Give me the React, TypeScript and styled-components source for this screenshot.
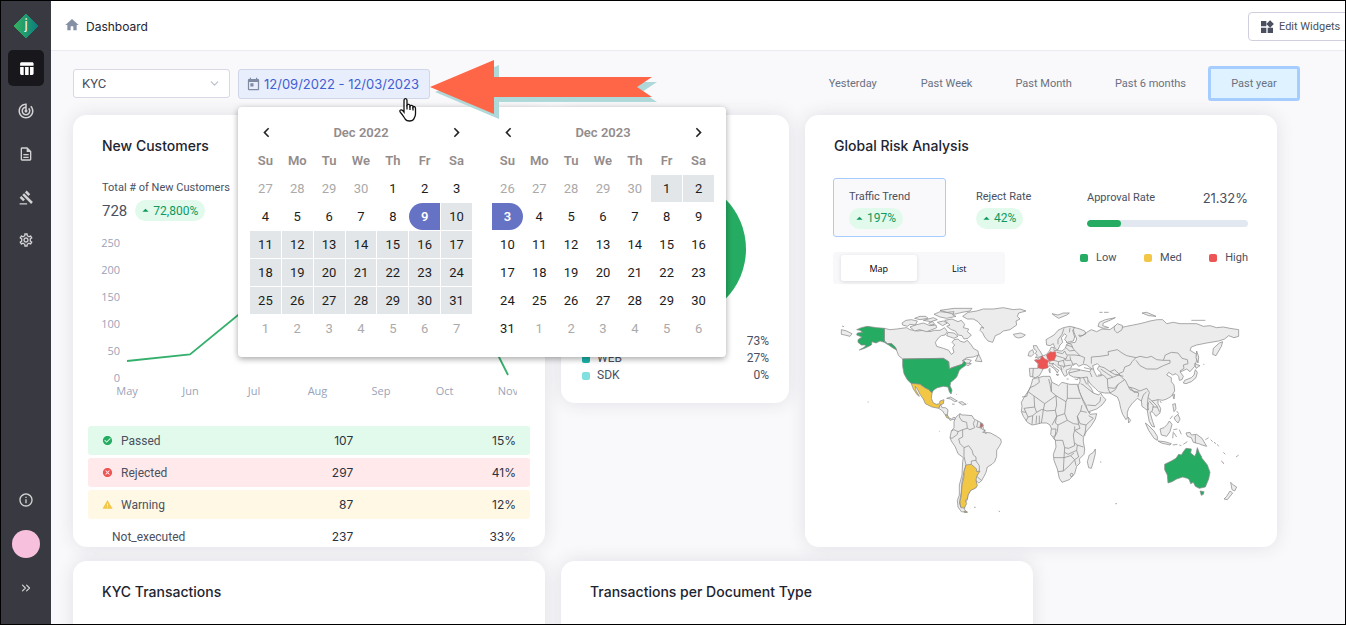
import React from "react";
import styled, { createGlobalStyle, css } from "styled-components";
import {
  MdTableChart,
  MdTrackChanges,
  MdOutlineDescription,
  MdGavel,
  MdOutlineSettings,
  MdInfoOutline,
  MdHome,
  MdWidgets,
  MdToday,
  MdChevronLeft,
  MdChevronRight,
  MdCheckCircle,
  MdCancel,
  MdWarning,
  MdArrowDropUp,
} from "react-icons/md";
import { ChevronDown, ChevronsRight } from "lucide-react";

const GlobalStyle = createGlobalStyle`
  *, *::before, *::after { box-sizing: border-box; }
  body { margin: 0; font-family: Roboto, "Liberation Sans", sans-serif; font-size: 12px; color: #4a5060; background: #f9f9fb; }
  button, select { font: inherit; color: inherit; }
  h2, p { margin: 0; }
`;

const heading = css`
  font-family: Inter, "Liberation Sans", sans-serif;
  font-size: 14px;
  line-height: 20px;
  font-weight: 500;
  color: #1d2430;
`;

/* ---------- shell ---------- */

const Shell = styled.div`
  display: flex;
  height: 100vh;
  border: 1px solid #000;
  overflow: hidden;
`;

const Sidebar = styled.nav`
  flex: none;
  width: 50px;
  background: #393941;
  display: flex;
  flex-direction: column;
  align-items: center;
  justify-content: space-between;
  padding-bottom: 18px;
`;

const NavGroup = styled.div<{ $gap: number }>`
  display: flex;
  flex-direction: column;
  align-items: center;
  gap: ${(p) => p.$gap}px;
`;

const Brand = styled.a`
  height: 42px;
  padding-top: 12px;
  display: block;
`;

const NavButton = styled.button<{ $active?: boolean }>`
  width: 36px;
  height: 36px;
  padding: 0;
  border: 0;
  border-radius: 5px;
  display: flex;
  align-items: center;
  justify-content: center;
  color: ${(p) => (p.$active ? "#fff" : "#d2d2d4")};
  background: ${(p) => (p.$active ? "#18181c" : "transparent")};
`;

const Avatar = styled.span`
  width: 28px;
  height: 28px;
  border-radius: 50%;
  background: #f7c0dd;
`;

const Page = styled.div`
  flex: 1;
  min-width: 0;
  display: flex;
  flex-direction: column;
  background: #f9f9fb;
`;

const TopBar = styled.header`
  flex: none;
  height: 50px;
  background: #fff;
  border-bottom: 1px solid #ebecf2;
  display: flex;
  align-items: center;
  padding: 2px 0 0 13px;
`;

const Crumb = styled.a`
  display: flex;
  align-items: center;
  gap: 6px;
  font-family: Inter, "Liberation Sans", sans-serif;
  font-size: 12px;
  color: #1d2430;
  text-decoration: none;
  svg {
    color: #8690a5;
    margin-bottom: 3px;
  }
`;

const EditButton = styled.button`
  margin-left: auto;
  margin-right: -11px;
  width: 108px;
  height: 29px;
  padding: 0 0 0 10px;
  border: 1px solid #cfcfe0;
  border-radius: 4px;
  background: #fff;
  display: flex;
  align-items: center;
  gap: 4px;
  font-size: 11px;
  white-space: nowrap;
  color: #4a5060;
`;

/* ---------- filters ---------- */

const Filters = styled.div`
  flex: none;
  height: 64px;
  padding: 0 45px 0 22px;
  display: flex;
  align-items: center;
`;

const SelectBox = styled.div`
  display: grid;
  align-items: center;
  width: 157px;
  height: 29px;
  margin-right: 8px;
  > * {
    grid-area: 1 / 1;
  }
  svg {
    justify-self: end;
    margin-right: 9px;
    color: #b9bdca;
    pointer-events: none;
  }
`;

const Select = styled.select`
  appearance: none;
  width: 100%;
  height: 29px;
  padding: 0 8px;
  border: 1px solid #d8d8e6;
  border-radius: 3px;
  background: #fff;
  font-size: 13px;
`;

const DateField = styled.div`
  position: relative;
  z-index: 5;
  margin-top: 2px;
`;

const DateButton = styled.button`
  width: 192px;
  height: 30px;
  padding: 0 0 0 7px;
  border: 1px solid #cfd6e8;
  border-radius: 3px;
  background: #e8eefb;
  display: flex;
  align-items: center;
  gap: 3px;
  font-family: Inter, "Liberation Sans", sans-serif;
  font-size: 13px;
  color: #3f5fd4;
  white-space: pre;
  svg {
    color: #7f8aa3;
  }
`;

const Periods = styled.div`
  margin-left: auto;
  display: flex;
  gap: 1px;
`;

const Period = styled.button<{ $active?: boolean }>`
  height: 35px;
  min-width: 92px;
  padding: 0 18px;
  border: 3px solid ${(p) => (p.$active ? "#a6cdff" : "transparent")};
  border-radius: 3px;
  background: ${(p) => (p.$active ? "#def3ff" : "transparent")};
  font-size: 11px;
  color: #6a7080;
  white-space: nowrap;
`;

/* ---------- calendar ---------- */

const Popup = styled.div`
  position: absolute;
  left: 0;
  top: 38px;
  width: 488px;
  height: 250px;
  padding: 11px;
  display: flex;
  gap: 18px;
  background: #fff;
  border-radius: 4px;
  box-shadow: 0 2px 6px rgba(0, 0, 0, 0.35);
`;

const Month = styled.div`
  width: 224px;
`;

const MonthHead = styled.div`
  height: 28px;
  padding: 0 7px;
  display: flex;
  align-items: center;
  justify-content: space-between;
  font-size: 13px;
  font-weight: 600;
  color: #938c8c;
`;

const ArrowButton = styled.button`
  border: 0;
  padding: 0;
  width: 20px;
  height: 20px;
  background: none;
  color: #222;
  display: flex;
  align-items: center;
  justify-content: center;
`;

const Days = styled.table`
  width: 224px;
  table-layout: fixed;
  border-spacing: 1px;
  th,
  td {
    height: 27px;
    padding: 0;
  }
  th {
    font-size: 13px;
    font-weight: 600;
    color: #938c8c;
  }
`;

type DayKind = "plain" | "muted" | "range" | "start" | "end";

const DayButton = styled.button<{ $kind: DayKind }>`
  display: block;
  width: 100%;
  height: 27px;
  padding: 0 0 1px;
  border: 0;
  font-size: 13px;
  font-weight: ${(p) => (p.$kind === "start" || p.$kind === "end" ? 600 : 400)};
  color: ${(p) =>
    p.$kind === "muted" ? "#aaa" : p.$kind === "start" || p.$kind === "end" ? "#fff" : "#1c1c1c"};
  background: ${(p) =>
    p.$kind === "range" ? "#e2e6e9" : p.$kind === "start" || p.$kind === "end" ? "#6673c4" : "transparent"};
  border-radius: ${(p) =>
    p.$kind === "start" ? "14px 0 0 14px" : p.$kind === "end" ? "0 14px 14px 0" : "0"};
`;

const Pointer = styled.svg`
  position: absolute;
  left: 192px;
  top: -10px;
  pointer-events: none;
`;

const HandCursor = styled.svg`
  position: absolute;
  left: 160px;
  top: 28px;
  pointer-events: none;
`;

/* ---------- cards ---------- */

const Board = styled.main`
  display: grid;
  grid-template-columns: repeat(5, minmax(0, 1fr));
  gap: 14px 16px;
  padding: 0 68px 0 22px;
`;

const Card = styled.section<{ $span: number; $tall?: boolean }>`
  grid-column: span ${(p) => p.$span};
  align-self: start;
  height: ${(p) => (p.$tall ? "432px" : "288px")};
  overflow: hidden;
  background: #fff;
  border-radius: 14px;
  box-shadow: 0 0 18px rgba(50, 50, 80, 0.12);
`;

const CardTitle = styled.h2`
  ${heading}
  padding: 21px 29px 0;
`;

const Total = styled.p`
  margin: 24px 29px 0;
  font-size: 11px;
  line-height: 16px;
`;

const TotalLine = styled.div`
  margin: 4px 29px 0;
  display: flex;
  align-items: center;
  gap: 8px;
  font-size: 15px;
  line-height: 20px;
`;

const Badge = styled.span`
  display: inline-flex;
  align-items: center;
  height: 21px;
  padding: 0 7px 0 3px;
  border-radius: 11px;
  background: #e2faec;
  color: #0d9960;
  font-size: 12px;
`;

const LineChart = styled.svg`
  display: block;
  margin: 12px 0 0 15px;
  text {
    font-family: "Open Sans", sans-serif;
    font-size: 11px;
    fill: #9aa3ba;
  }
`;

const StatusTable = styled.table`
  width: calc(100% - 30px);
  margin: 22px 15px 0;
  border-spacing: 0 3px;
  table-layout: fixed;
  td,
  th {
    height: 29px;
    padding: 0;
    text-align: right;
    font-weight: 400;
  }
  td {
    width: 20%;
    font-family: Inter, "Liberation Sans", sans-serif;
    font-size: 12px;
    color: #2c3240;
  }
  th {
    width: 40%;
    text-align: left;
    padding-left: 14px;
    border-radius: 3px 0 0 3px;
  }
  td:last-child {
    width: 40%;
    padding-right: 14px;
    border-radius: 0 3px 3px 0;
  }
`;

const StatusRow = styled.tr<{ $tint: string }>`
  background: ${(p) => p.$tint};
`;

const StatusLabel = styled.span<{ $indent?: boolean }>`
  display: flex;
  align-items: center;
  gap: 8px;
  padding-left: ${(p) => (p.$indent ? "10px" : "0")};
`;

const Pie = styled.svg`
  display: block;
  margin: 22px auto 0;
`;

const Breakdown = styled.ul`
  list-style: none;
  margin: 13px 20px 0 21px;
  padding: 0;
  font-size: 12px;
  line-height: 17px;
`;

const BreakdownItem = styled.li`
  display: flex;
  align-items: center;
  gap: 7px;
  > span:last-child {
    margin-left: auto;
  }
`;

const Swatch = styled.i<{ $color: string }>`
  width: 8px;
  height: 8px;
  border-radius: 2px;
  background: ${(p) => p.$color};
`;

const RiskBody = styled.div`
  display: flex;
  justify-content: space-between;
  padding: 22px 29px 0 28px;
`;

const Metrics = styled.div`
  display: grid;
  grid-template-columns: 113px 90px;
  column-gap: 14px;
  row-gap: 15px;
`;

const Metric = styled.button<{ $active?: boolean }>`
  height: 59px;
  padding: 3px 15px 0;
  border: 1px solid ${(p) => (p.$active ? "#a6cdff" : "transparent")};
  border-radius: 3px;
  background: ${(p) => (p.$active ? "#f9f9fc" : "transparent")};
  display: flex;
  flex-direction: column;
  align-items: flex-start;
  justify-content: center;
  gap: 4px;
  line-height: 14px;
  font-size: 11px;
  white-space: nowrap;
`;

const Toggle = styled.div`
  grid-column: 1 / -1;
  width: 172px;
  height: 32px;
  padding: 3px 8px;
  border-radius: 3px;
  background: #f8f8fa;
  display: flex;
  gap: 5px;
`;

const ToggleButton = styled.button<{ $active?: boolean }>`
  width: 76px;
  border: 0;
  border-radius: 3px;
  font-family: "Open Sans", sans-serif;
  font-size: 9px;
  color: #000;
  background: ${(p) => (p.$active ? "#fff" : "transparent")};
  box-shadow: ${(p) => (p.$active ? "0 1px 4px rgba(0,0,0,.12)" : "none")};
`;

const Approval = styled.div`
  width: 168px;
  padding-top: 10px;
`;

const ApprovalHead = styled.label`
  display: flex;
  justify-content: space-between;
  align-items: center;
  font-size: 11px;
  line-height: 20px;
  padding-left: 7px;
  strong {
    font-family: Inter, "Liberation Sans", sans-serif;
    font-weight: 400;
    font-size: 13px;
  }
`;

const Bar = styled.progress`
  appearance: none;
  display: block;
  width: 161px;
  height: 7px;
  margin: 12px 0 0 7px;
  border: 0;
  border-radius: 4px;
  overflow: hidden;
  &::-webkit-progress-bar {
    background: #e2e8f0;
  }
  &::-webkit-progress-value {
    background: #26ab62;
    border-radius: 4px;
  }
`;

const Legend = styled.div`
  display: flex;
  justify-content: space-between;
  margin-top: 23px;
  font-size: 11px;
  line-height: 16px;
  span {
    display: flex;
    align-items: center;
    gap: 8px;
  }
`;

const MapSvg = styled.svg`
  display: block;
  margin: 11px 0 0 25px;
  .land {
    fill: #ececec;
  }
  .low {
    fill: #26ab62;
  }
  .med {
    fill: #f3c746;
  }
  .high {
    fill: #ed5454;
  }
  .sea {
    fill: #fff;
  }
  .border {
    fill: none;
  }
`;

/* ---------- data ---------- */

const weekdays = ["Su", "Mo", "Tu", "We", "Th", "Fr", "Sa"];

type MonthData = { name: string; lead: number[]; days: number; kind: (d: number) => DayKind };

const months: MonthData[] = [
  {
    name: "Dec 2022",
    lead: [27, 28, 29, 30],
    days: 31,
    kind: (d) => (d === 9 ? "start" : d > 9 ? "range" : "plain"),
  },
  {
    name: "Dec 2023",
    lead: [26, 27, 28, 29, 30],
    days: 31,
    kind: (d) => (d === 3 ? "end" : d < 3 ? "range" : "plain"),
  },
];

function buildWeeks(m: MonthData) {
  const cells: { d: number; kind: DayKind }[] = m.lead.map((d) => ({ d, kind: "muted" }));
  for (let d = 1; d <= m.days; d++) cells.push({ d, kind: m.kind(d) });
  for (let d = 1; cells.length < 42; d++) cells.push({ d, kind: "muted" });
  return Array.from({ length: 6 }, (_, i) => cells.slice(i * 7, i * 7 + 7));
}

const statuses = [
  { label: "Passed", count: 107, share: "15%", tint: "#e2faec", icon: <MdCheckCircle size={11} color="#26ab62" /> },
  { label: "Rejected", count: 297, share: "41%", tint: "#ffe9ea", icon: <MdCancel size={11} color="#ed5454" /> },
  { label: "Warning", count: 87, share: "12%", tint: "#fff8e4", icon: <MdWarning size={11} color="#f3c746" /> },
  { label: "Not_executed", count: 237, share: "33%", tint: "transparent", icon: null },
];

const periods = ["Yesterday", "Past Week", "Past Month", "Past 6 months", "Past year"];
const chartMonths = ["May", "Jun", "Jul", "Aug", "Sep", "Oct", "Nov"];
const chartTicks = [250, 200, 150, 100, 50, 0];

/* ---------- parts ---------- */

function Calendar({ month }: { month: MonthData }) {
  return (
    <Month>
      <MonthHead>
        <ArrowButton aria-label="Previous month">
          <MdChevronLeft size={19} />
        </ArrowButton>
        {month.name}
        <ArrowButton aria-label="Next month">
          <MdChevronRight size={19} />
        </ArrowButton>
      </MonthHead>
      <Days>
        <thead>
          <tr>
            {weekdays.map((w) => (
              <th key={w} scope="col">
                {w}
              </th>
            ))}
          </tr>
        </thead>
        <tbody>
          {buildWeeks(month).map((week, i) => (
            <tr key={i}>
              {week.map((c) => (
                <td key={c.d}>
                  <DayButton $kind={c.kind}>{c.d}</DayButton>
                </td>
              ))}
            </tr>
          ))}
        </tbody>
      </Days>
    </Month>
  );
}

function WorldMap() {
  return (
    <MapSvg width="420" height="230" viewBox="0 0 1260 690" role="img" aria-label="World risk map">
      <g stroke="#8a8a8a" strokeWidth="2.2" strokeLinejoin="round">
        <g className="land">
          <path d="M163 100L180 104L200 102L230 98L240 104L262 108L280 106L300 110L314 106L330 106L344 98L352 110L345 120L334 122L326 128L316 142L320 154L340 160L356 166L364 178L372 172L368 158L374 150L366 142L372 134L384 132L390 138L402 142L412 136L424 150L430 160L444 168L446 180L430 186L410 188L396 198L410 192L424 196L416 206L398 208L384 212L366 218L358 222L356 200L340 190L218 192L206 182L198 162L185 146L172 146L163 138Z" />
          <path d="M446 178L452 190L456 200L436 198ZM408 204L424 206L414 212L406 208Z" />
          <path d="M216 84L228 76L244 74L262 78L256 90L240 88L232 94L218 90ZM240 96L256 90L280 84L300 92L318 90L320 98L306 104L290 110L268 104L254 108ZM254 70L270 64L288 64L294 70L270 74ZM280 76L310 68L322 74L302 80ZM312 58L330 50L350 52L372 50L368 60L378 64L350 70L330 66ZM330 46L372 40L426 40L420 48L396 52L372 58L350 52ZM322 82L340 78L352 84L338 92ZM296 84L308 80L314 88L302 90Z" />
          <path d="M344 76L366 72L384 80L394 76L404 88L400 98L416 102L412 110L424 120L414 130L402 132L396 122L384 120L376 108L364 104L350 94L360 90ZM354 112L372 114L384 124L372 130L350 122Z" />
          <path d="M398 64L414 52L440 48L460 42L490 42L520 38L550 44L570 42L588 48L566 54L562 64L570 72L558 78L560 90L540 104L520 108L510 116L496 122L488 142L474 138L464 126L458 114L450 106L454 96L462 100L452 90L444 80L430 72L412 72Z" />
          <path d="M550 118L560 116L572 114L586 120L578 126L566 129L556 126ZM34 104L50 108L66 116L60 124L44 120L34 118Z" />
          <path d="M326 340L332 328L336 338L346 338L354 344L352 360L344 358L338 348ZM356 368L364 372L372 366L378 372L366 374L360 376ZM350 310L362 306L382 318L374 320L362 312ZM386 322L396 320L408 328L398 330ZM366 327L374 328M410 328L412 326" />
          <path d="M378 366L390 356L396 360L404 360L426 362L432 372L444 378L458 386L460 400L466 408L458 412L468 412L482 414L500 424L512 432L514 442L508 454L500 466L500 484L494 500L486 508L472 516L468 532L462 544L454 558L446 564L438 556L440 576L422 586L414 600L412 614L404 626L404 644L412 652L394 650L384 636L382 616L388 600L388 570L396 540L398 500L400 488L384 476L376 456L364 438L360 428L364 408L372 398L372 380Z" />
        </g>
        <path className="border" d="M390 356L388 366L396 378L410 382L412 400L398 404L398 426L386 432L390 446L402 458L416 452L426 466L430 480L438 486L438 498L448 512L448 526L440 544L454 556M364 408L372 404L384 410L382 418L366 430L360 428M384 410L398 404M412 400L420 404L434 398L430 386L434 376M444 378L440 396L450 398L466 408M402 458L402 484L408 510M424 508L424 498L438 496M394 640L388 624L394 590L396 560L402 530L408 510" />
        <g className="low">
          <path d="M80 104L94 98L112 94L140 98L163 100L163 138L172 146L185 146L196 156L200 165L190 160L176 150L163 142L150 138L138 144L126 140L124 150L104 160L88 165L104 156L108 150L94 150L84 142L84 134L96 126L80 120L82 114L98 112L90 106Z" />
          <path d="M218 192L340 190L356 200L358 222L366 218L384 212L396 208L402 198L408 204L406 212L394 220L388 226L384 236L380 246L372 254L362 262L360 272L366 286L363 297L358 290L354 276L340 274L322 278L310 286L306 294L296 284L284 278L270 268L244 266L232 254L222 236L218 214Z" />
        </g>
        <g className="med">
          <path d="M244 266L256 266L270 268L284 278L296 284L306 294L304 310L310 324L320 328L328 326L330 318L342 314L340 326L330 330L326 340L306 336L286 326L280 312L270 298L260 278L256 274L258 286L268 304L262 300L250 282Z" />
          <path d="M346 360L354 362L356 370L350 368Z" />
          <path d="M408 510L424 508L440 522L440 530L450 528L440 544L438 556L442 572L436 580L422 586L414 600L412 612L406 616L410 626L402 640L392 636L390 620L394 600L396 570L402 545L402 530Z" />
          <path d="M402 648L412 651L404 653Z" />
        </g>
        <path className="high" d="M452 384L460 390L454 398L450 396Z" />
        <path d="M113 321h3M328 409h2M432 637h5M506 648l4 2M36 93l6 2M464 414l6 2M378 298h2" />

        <g transform="translate(600 0)">
          <g className="land">
            <path d="M10 152L20 152L24 160L30 168L38 182L28 186L16 188L22 180L16 176L20 168L12 162ZM-2 170L8 164L12 176L4 184L-6 182Z" />
            <path d="M128 96L150 102L164 108L168 116L156 122L146 120L150 126L160 120L170 112L184 104L200 110L216 102L240 104L256 92L262 100L290 94L310 90L330 86L346 82L360 78L382 74L398 74L410 86L430 82L450 86L480 86L500 86L520 94L540 92L560 98L580 96L600 100L626 104L626 124L612 128L596 122L584 132L566 138L530 144L500 150L484 156L480 166L500 178L500 196L494 214L480 230L470 222L458 228L450 230L460 244L456 254L448 256L446 244L438 236L428 240L416 232L410 240L424 248L424 260L432 270L434 288L424 304L410 312L398 316L384 314L384 326L392 340L390 354L378 364L372 356L366 350L360 352L364 366L368 380L374 396L366 394L358 380L354 360L352 346L344 340L336 334L334 318L322 310L306 326L296 340L292 352L292 368L288 374L278 358L272 340L268 320L262 306L250 300L240 294L224 294L206 290L196 280L184 270L174 256L174 268L184 280L190 294L206 300L212 294L218 304L228 314L216 330L200 342L176 350L172 346L168 330L158 312L148 290L144 272L150 260L150 248L130 246L118 240L116 230L124 222L140 222L156 226L180 230L184 220L170 210L160 208L146 214L140 206L128 208L122 220L108 226L112 240L104 244L98 234L92 222L80 214L72 206L66 208L72 216L86 226L82 234L74 222L60 212L50 216L40 220L34 232L28 242L16 248L0 244L-2 220L24 220L24 206L14 196L36 184L50 178L58 168L64 156L72 158L72 166L96 168L106 160L110 148L120 144L136 142L140 132L132 112Z" />
            <path d="M48 134L58 128L72 120L84 106L100 98L120 94L134 98L128 106L134 126L130 138L112 142L104 134L110 122L104 116L94 128L98 142L90 150L84 164L76 162L70 146L60 152L50 150Z" />
            <path d="M66 56L84 60L100 54L118 54L110 60L86 70L76 64ZM204 94L208 82L226 74L256 68L240 76L220 84L218 92L236 98L220 100ZM336 54L350 52L378 64L356 62ZM252 96L262 86L278 92L276 104L262 114L254 106Z" />
            <path d="M548 178L550 160L568 144L578 140L574 154L558 182ZM500 168L506 186L504 204L498 188ZM494 206L510 212L498 220ZM460 264L464 256L484 248L492 240L496 224L502 232L498 248L484 260L468 266ZM428 300l6 -2l-2 14zM294 366L302 376L296 384Z" />
            <path d="M346 384L356 392L372 408L382 424L382 436L372 430L356 406ZM384 438L404 440L424 446L420 450L394 444ZM390 402L402 398L412 388L418 378L426 388L420 410L410 424L394 420ZM468 414L480 412L484 420L500 418L516 430L530 454L516 450L506 446L490 442L484 428L472 424ZM428 328L436 326L438 342L432 350ZM432 368L444 358L450 372L444 384L436 376Z" />
            <path d="M602 562L610 570L620 576L614 588L606 584ZM600 588L608 594L592 614L582 612L590 604Z" />
            <path d="M8 252L24 248L40 244L60 244L66 262L86 272L96 262L120 268L142 268L148 290L160 320L172 344L180 358L200 356L196 372L184 392L170 408L160 424L160 440L164 462L162 478L148 492L150 504L140 514L134 536L118 554L96 562L88 550L82 522L72 496L70 478L78 456L76 436L62 418L64 400L60 390L50 384L34 384L18 388L6 390L-8 382L-20 364L-26 350L-24 334L-26 322L-16 304L-2 284L4 268Z" />
            <path d="M196 462L196 476L190 500L184 520L176 518L172 500L178 480L190 472Z" />
            <path d="M56 224l4 -4v14zM78 238l8 0l-2 4z" />
          </g>
          <path className="sea" d="M188 212L202 206L208 212L202 222L212 232L214 242L200 244L192 228Z" />
          <path className="border" d="M184 206L184 186L210 184L236 180L234 170L262 164L276 174L290 182L318 188L306 200L300 210L284 216L280 230L266 236L254 224L240 230L222 218L208 214M318 188L330 184L350 188L364 184L380 194L400 196L420 196L420 204L400 212L380 222L350 222L330 212L318 196M400 196L406 180L424 172L444 174L456 190L472 194L474 206L460 210L462 220L450 228M266 236L276 248L286 256L296 276L312 280L330 288L350 280L358 292L354 308L366 318L384 314M240 294L256 284L264 268L284 254M296 276L300 284L326 294L324 306M300 276L312 292L326 290M204 240L220 240L232 252L234 280L240 294M232 252L250 246L266 240L280 244M212 222L232 236L248 246M240 230L254 238L270 240M234 278L254 280L264 268M142 250L172 246L174 256M152 266L160 270L172 280L190 294M160 248L170 268M172 330L196 332L210 320L212 306M334 318L340 300L350 290M354 308L352 330L356 346M358 318L370 332L366 350M366 318L380 332L388 350M368 336L382 336M356 322L352 346M134 206L130 212M180 232L186 246M162 218L180 222L190 222" />
          <path className="border" d="M102 100L96 118L84 134L84 148M120 98L118 112M108 142L124 148L130 162L150 182M110 150L128 156M108 158L118 168L134 166M104 168L110 180L134 180L150 182L164 188L160 206M78 182L98 188L108 192L112 182M72 196L86 200L100 196L108 192M86 200L84 210L100 214L124 210M100 196L104 212L100 220M124 196L128 208M92 214L96 226M60 198L58 206L72 206M10 220L8 246M116 234L150 226M104 168L98 176L80 172M106 196L122 196L120 184" />
          <path className="border" d="M26 248L28 262L14 272L0 278L-6 290L-10 304L-24 306M-6 290L44 326L78 302L64 290L60 268L56 252M64 262L64 290M112 268V310H152M112 310L108 320L78 302L80 330L76 346L50 348L40 344L44 326M12 304L14 336L-18 340L-12 352L-24 350M14 336L20 352L34 344L40 344L38 360L34 384M20 352L8 362L6 388M-12 352L-6 366L8 362M20 362L18 386M28 362L28 386M-6 366L-12 378M76 346L80 364L66 390M80 364L104 356L108 320M104 356L112 376L130 386L146 388L142 364L152 348L156 330M152 348L170 352M142 364L150 386L168 390L190 370L176 362M80 364L76 384L84 390L112 376M168 390L164 424M146 388L150 400L134 406L134 394M64 402H78L76 420L70 426M84 390L82 410L72 430L76 436L98 436L104 458L116 460L134 452L130 420L134 406M134 406L158 424M104 458L102 488L72 488M102 488L122 482L134 494L118 512L100 528L102 488M100 528L84 530M104 472L114 478L140 466L142 450L134 444M142 450L160 456M140 466L146 486L134 494L138 512M122 482L132 474M120 538l6 -4l4 6l-6 6z" />
          <path className="high" stroke="#c96a6a" d="M14 196L30 194L36 183L44 192L56 197L52 206L54 218L38 222L24 218L26 206Z" />
          <path className="high" stroke="#c96a6a" d="M50 180L62 170L66 172L76 170L78 182L72 196L58 198L52 190Z" />
          <path className="low" d="M404 508L424 498L438 490L446 478L454 480L460 470L468 460L484 462L482 474L494 484L498 476L502 458L508 474L514 484L516 490L532 510L540 532L536 552L526 576L508 580L496 574L490 562L482 566L478 554L472 550L458 546L440 552L426 560L414 564L412 540L404 524ZM510 588L522 590L520 598L514 601Z" />
          <path className="border" d="M496 420V444M208 52h10M222 52h14M484 76h42M430 404L442 402M430 410L428 430M432 414L440 426M448 404l6 14M428 450l14 -2M448 450l6 2M460 448l12 -8M526 434l10 -6M542 434l6 6M552 442l6 4M562 448l4 6M618 486l8 -6M580 472l6 6M440 348l6 8M420 372l8 -10M520 208h3M210 501h4M256 626h5M176 352h6M134 252l10 2M110 252h6M390 318l4 6" />
          <path stroke="#a34848" d="M574 498l8 8" />
        </g>
      </g>
    </MapSvg>
  );
}

function Growth({ children }: { children: React.ReactNode }) {
  return (
    <Badge>
      <MdArrowDropUp size={15} />
      {children}
    </Badge>
  );
}

export default function App() {
  return (
    <>
      <GlobalStyle />
      <Shell>
        <Sidebar>
          <NavGroup $gap={7}>
            <Brand href="#" aria-label="Home">
              <svg width="26" height="26" viewBox="0 0 26 26">
                <defs>
                  <linearGradient id="brand" x1="0" y1="0" x2="1" y2="0">
                    <stop offset="0" stopColor="#35b35e" />
                    <stop offset="1" stopColor="#0b7d80" />
                  </linearGradient>
                </defs>
                <path d="M13 1L25 13L13 25L1 13Z" fill="url(#brand)" stroke="url(#brand)" strokeLinejoin="round" />
                <text x="13" y="16" textAnchor="middle" fontSize="13" fontFamily="Inter, sans-serif" fill="#fff">
                  j
                </text>
              </svg>
            </Brand>
            <NavButton $active aria-label="Dashboard">
              <MdTableChart size={17} />
            </NavButton>
            <NavButton aria-label="Monitoring">
              <MdTrackChanges size={18} />
            </NavButton>
            <NavButton aria-label="Documents">
              <MdOutlineDescription size={16} />
            </NavButton>
            <NavButton aria-label="Rules">
              <MdGavel size={15} />
            </NavButton>
            <NavButton aria-label="Settings">
              <MdOutlineSettings size={16} />
            </NavButton>
          </NavGroup>
          <NavGroup $gap={8}>
            <NavButton aria-label="Information">
              <MdInfoOutline size={16} />
            </NavButton>
            <NavButton aria-label="Profile">
              <Avatar />
            </NavButton>
            <NavButton aria-label="Expand">
              <ChevronsRight size={14} />
            </NavButton>
          </NavGroup>
        </Sidebar>
        <Page>
          <TopBar>
            <Crumb href="#">
              <MdHome size={16} />
              Dashboard
            </Crumb>
            <EditButton>
              <MdWidgets size={16} />
              Edit Widgets
            </EditButton>
          </TopBar>
          <Filters>
            <SelectBox>
              <Select aria-label="Product" defaultValue="KYC">
                <option>KYC</option>
              </Select>
              <ChevronDown size={13} strokeWidth={2} />
            </SelectBox>
            <DateField>
              <DateButton>
                <MdToday size={15} />
                12/09/2022 - 12/03/2023
              </DateButton>
              <Popup>
                {months.map((m) => (
                  <Calendar key={m.name} month={m} />
                ))}
              </Popup>
              <Pointer width="230" height="62" viewBox="0 0 230 62">
                <path d="M5 33L69 6V23H227L212 33L227 43H69V60Z" fill="#afd9d9" />
                <path d="M0 28L64 1V18H222L207 28L222 38H64V55Z" fill="#ff6547" />
              </Pointer>
              <HandCursor width="20" height="26" viewBox="0 0 20 26">
                <path
                  d="M6 15V3.5C6 1 9 1 9 3.5V8C9.600 7 12 7 12 9C12.600 8 15 8 15 10C15.600 9 17.500 9.500 17.500 11.500V17C17.500 20 16 21 15.500 22.500C14 24.500 9 24.500 7.500 22.500C6 20.500 5 18 2.500 15.500C.5 13 3.500 11.500 6 15Z"
                  fill="#fff"
                  stroke="#111"
                  strokeWidth="1.3"
                />
                <path d="M9 8V12.500M12 9V13M15 10V13.500" stroke="#111" strokeWidth="1.3" />
              </HandCursor>
            </DateField>
            <Periods>
              {periods.map((p) => (
                <Period key={p} $active={p === "Past year"}>
                  {p}
                </Period>
              ))}
            </Periods>
          </Filters>
          <Board>
            <Card $span={2} $tall>
              <CardTitle>New Customers</CardTitle>
              <Total>Total # of New Customers</Total>
              <TotalLine>
                728 <Growth>72,800%</Growth>
              </TotalLine>
              <LineChart width="429" height="168" viewBox="0 0 429 168">
                {chartTicks.map((t, i) => (
                  <text key={t} x="32" y={14 + i * 27} textAnchor="end">
                    {t}
                  </text>
                ))}
                {chartMonths.map((m, i) => (
                  <text key={m} x={39 + i * 63.5} y="162" textAnchor="middle">
                    {m}
                  </text>
                ))}
                <path
                  d="M39 128L102 121.500L166 69L229 30L293 44L356 14L420 142"
                  fill="none"
                  stroke="#35b06c"
                  strokeWidth="1.8"
                />
              </LineChart>
              <StatusTable>
                <tbody>
                  {statuses.map((s) => (
                    <StatusRow key={s.label} $tint={s.tint}>
                      <th scope="row">
                        <StatusLabel $indent={!s.icon}>
                          {s.icon}
                          {s.label}
                        </StatusLabel>
                      </th>
                      <td>{s.count}</td>
                      <td>{s.share}</td>
                    </StatusRow>
                  ))}
                </tbody>
              </StatusTable>
            </Card>
            <Card $span={1}>
              <CardTitle>Channels</CardTitle>
              <Pie width="142" height="142" viewBox="-71 -71 142 142">
                <circle r="71" fill="#26ab62" />
                <path d="M0 0V-71A71 71 0 0 0 -70.400 9Z" fill="#1cb5ac" />
              </Pie>
              <Breakdown>
                <BreakdownItem>
                  <Swatch $color="#26ab62" />
                  <span>API</span>
                  <span>73%</span>
                </BreakdownItem>
                <BreakdownItem>
                  <Swatch $color="#1cb5ac" />
                  <span>WEB</span>
                  <span>27%</span>
                </BreakdownItem>
                <BreakdownItem>
                  <Swatch $color="#82dfe0" />
                  <span>SDK</span>
                  <span>0%</span>
                </BreakdownItem>
              </Breakdown>
            </Card>
            <Card $span={2} $tall>
              <CardTitle>Global Risk Analysis</CardTitle>
              <RiskBody>
                <Metrics>
                  <Metric $active>
                    Traffic Trend
                    <Growth>197%</Growth>
                  </Metric>
                  <Metric>
                    Reject Rate
                    <Growth>42%</Growth>
                  </Metric>
                  <Toggle>
                    <ToggleButton $active>Map</ToggleButton>
                    <ToggleButton>List</ToggleButton>
                  </Toggle>
                </Metrics>
                <Approval>
                  <ApprovalHead htmlFor="approval">
                    Approval Rate <strong>21.32%</strong>
                  </ApprovalHead>
                  <Bar id="approval" max={100} value={21.32} />
                  <Legend>
                    <span>
                      <Swatch $color="#26ab62" />
                      Low
                    </span>
                    <span>
                      <Swatch $color="#f3c746" />
                      Med
                    </span>
                    <span>
                      <Swatch $color="#ed5454" />
                      High
                    </span>
                  </Legend>
                </Approval>
              </RiskBody>
              <WorldMap />
            </Card>
            <Card $span={2}>
              <CardTitle>KYC Transactions</CardTitle>
            </Card>
            <Card $span={2}>
              <CardTitle>Transactions per Document Type</CardTitle>
            </Card>
          </Board>
        </Page>
      </Shell>
    </>
  );
}
